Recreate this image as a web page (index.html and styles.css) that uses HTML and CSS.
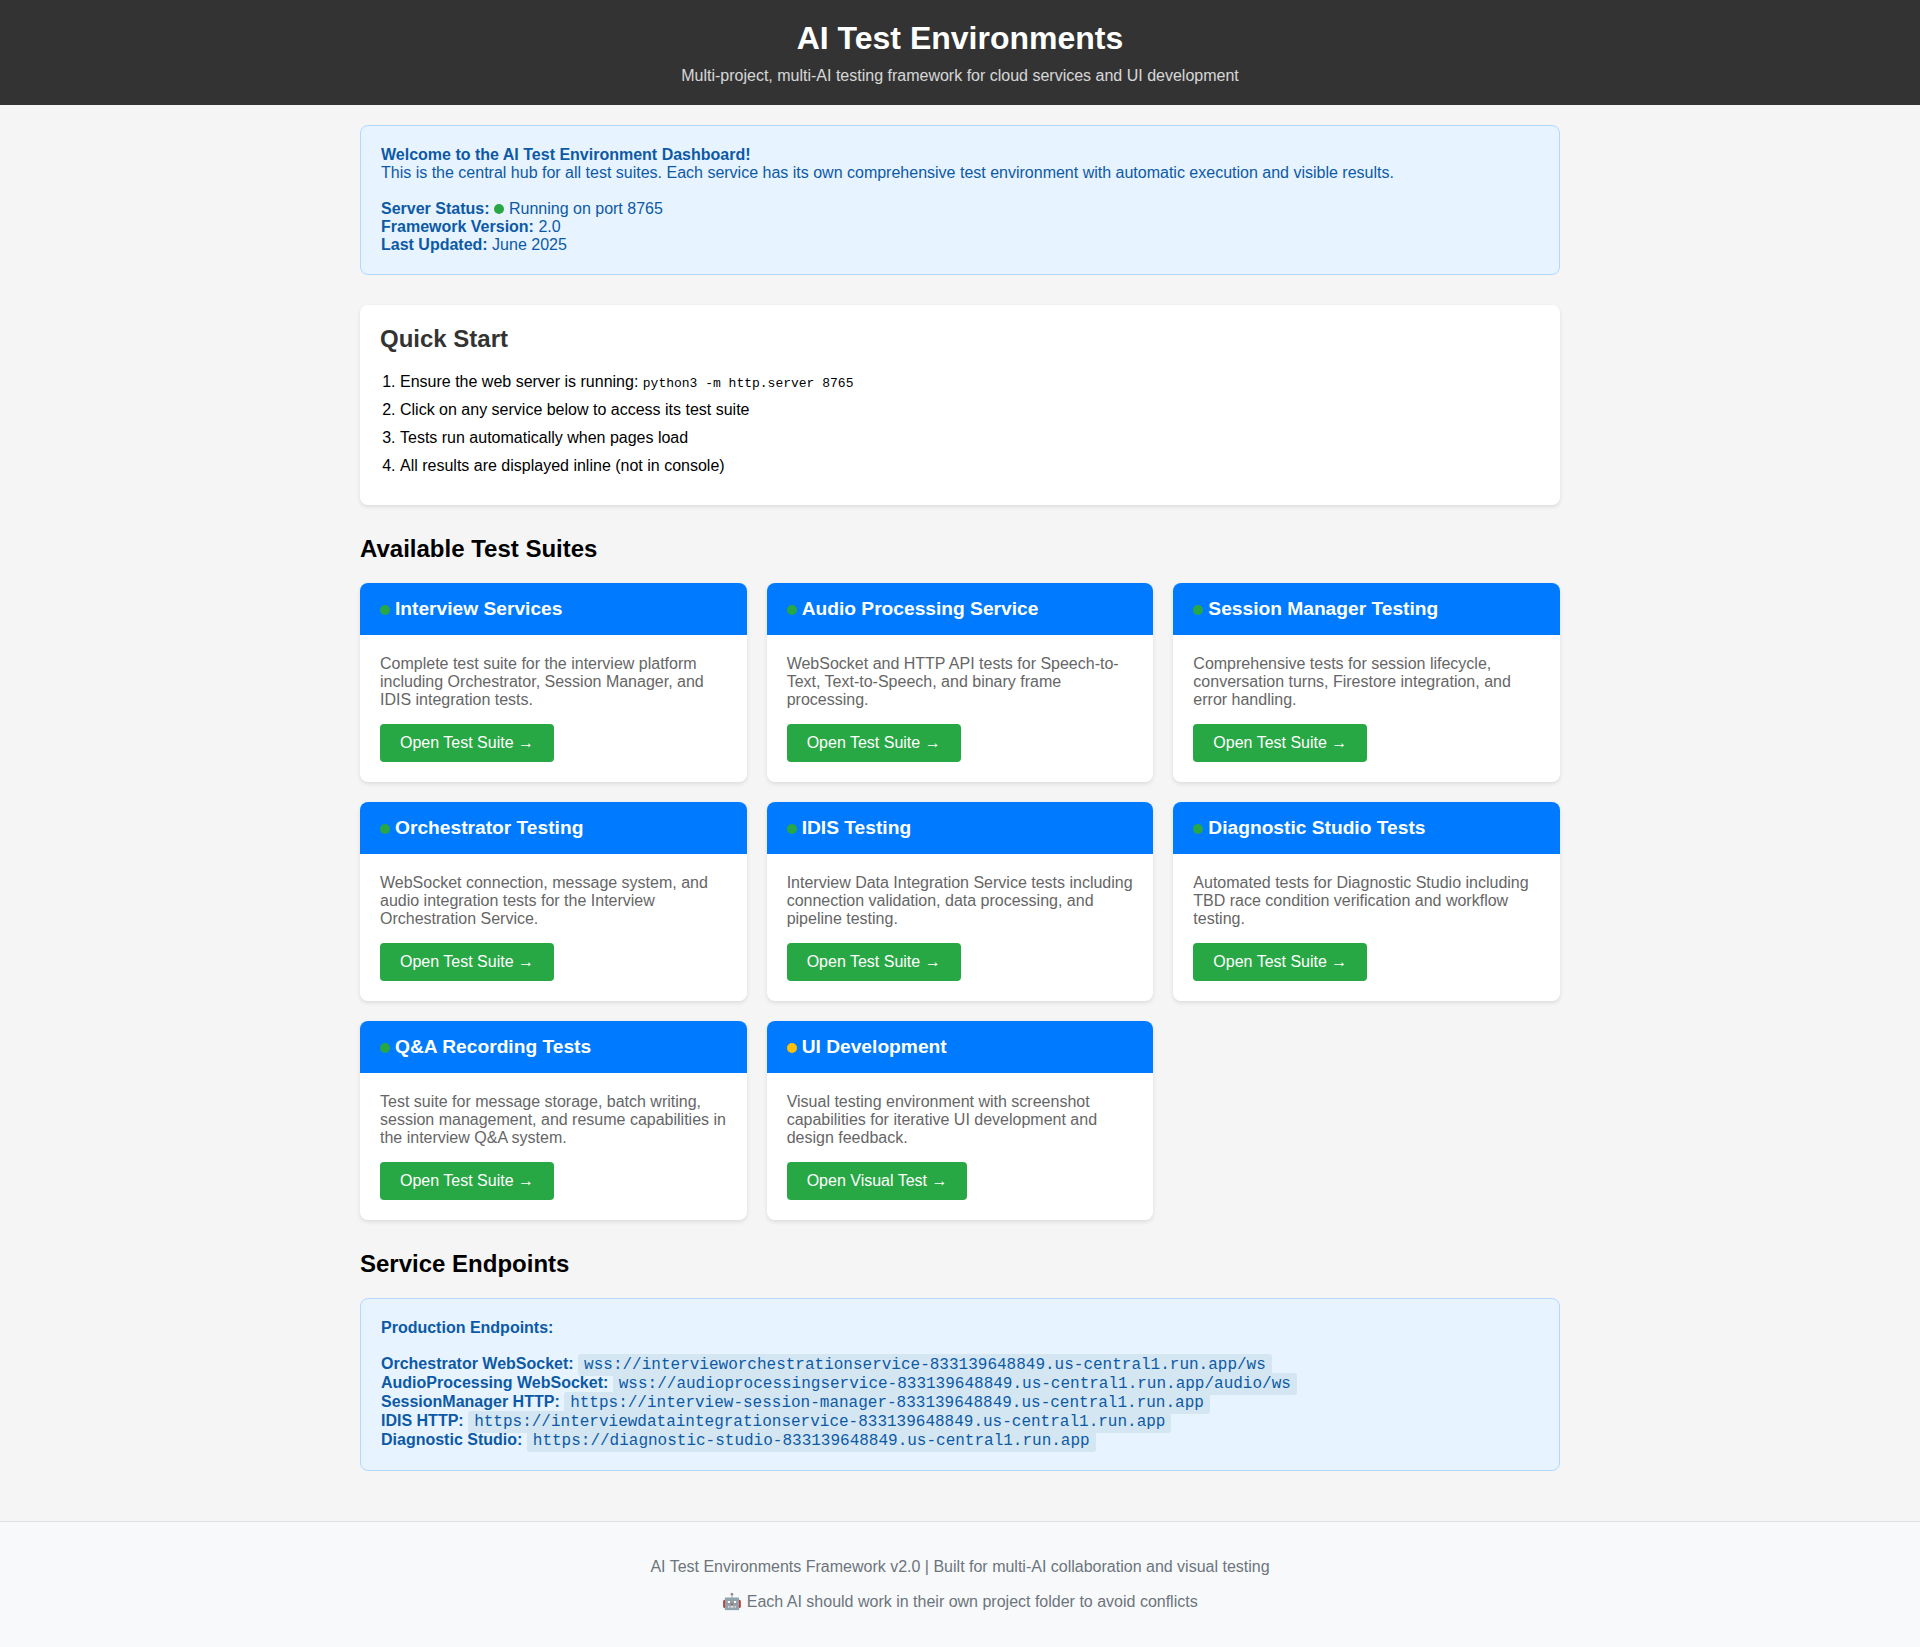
FILE: index.html
```html
<!DOCTYPE html>
<html lang="en">
<head>
<meta charset="UTF-8">
<title>AI Test Environments</title>
<link rel="stylesheet" href="styles.css">
</head>
<body>
<header class="header">
  <h1>AI Test Environments</h1>
  <p>Multi-project, multi-AI testing framework for cloud services and UI development</p>
</header>
<main class="container">
  <div class="info-box">
    <strong>Welcome to the AI Test Environment Dashboard!</strong><br>
    This is the central hub for all test suites. Each service has its own comprehensive test environment with automatic execution and visible results.<br><br>
    <strong>Server Status:</strong> <span class="status active"></span>Running on port 8765<br>
    <strong>Framework Version:</strong> 2.0<br>
    <strong>Last Updated:</strong> June 2025
  </div>
  <section class="quick-start">
    <h2>Quick Start</h2>
    <ol>
      <li>Ensure the web server is running: <code>python3 -m http.server 8765</code></li>
      <li>Click on any service below to access its test suite</li>
      <li>Tests run automatically when pages load</li>
      <li>All results are displayed inline (not in console)</li>
    </ol>
  </section>
  <h2>Available Test Suites</h2>
  <div class="grid">
    <article class="card">
      <div class="card-header"><span class="status active"></span>Interview Services</div>
      <div class="card-body"><p>Complete test suite for the interview platform including Orchestrator, Session Manager, and IDIS integration tests.</p><a class="button">Open Test Suite →</a></div>
    </article>
    <article class="card">
      <div class="card-header"><span class="status active"></span>Audio Processing Service</div>
      <div class="card-body"><p>WebSocket and HTTP API tests for Speech-to-Text, Text-to-Speech, and binary frame processing.</p><a class="button">Open Test Suite →</a></div>
    </article>
    <article class="card">
      <div class="card-header"><span class="status active"></span>Session Manager Testing</div>
      <div class="card-body"><p>Comprehensive tests for session lifecycle, conversation turns, Firestore integration, and error handling.</p><a class="button">Open Test Suite →</a></div>
    </article>
    <article class="card">
      <div class="card-header"><span class="status active"></span>Orchestrator Testing</div>
      <div class="card-body"><p>WebSocket connection, message system, and audio integration tests for the Interview Orchestration Service.</p><a class="button">Open Test Suite →</a></div>
    </article>
    <article class="card">
      <div class="card-header"><span class="status active"></span>IDIS Testing</div>
      <div class="card-body"><p>Interview Data Integration Service tests including connection validation, data processing, and pipeline testing.</p><a class="button">Open Test Suite →</a></div>
    </article>
    <article class="card">
      <div class="card-header"><span class="status active"></span>Diagnostic Studio Tests</div>
      <div class="card-body"><p>Automated tests for Diagnostic Studio including TBD race condition verification and workflow testing.</p><a class="button">Open Test Suite →</a></div>
    </article>
    <article class="card">
      <div class="card-header"><span class="status active"></span>Q&amp;A Recording Tests</div>
      <div class="card-body"><p>Test suite for message storage, batch writing, session management, and resume capabilities in the interview Q&amp;A system.</p><a class="button">Open Test Suite →</a></div>
    </article>
    <article class="card">
      <div class="card-header"><span class="status pending"></span>UI Development</div>
      <div class="card-body"><p>Visual testing environment with screenshot capabilities for iterative UI development and design feedback.</p><a class="button">Open Visual Test →</a></div>
    </article>
  </div>
  <h2>Service Endpoints</h2>
  <div class="info-box">
    <strong>Production Endpoints:</strong><br><br>
    <strong>Orchestrator WebSocket:</strong> <code>wss://intervieworchestrationservice-833139648849.us-central1.run.app/ws</code><br>
    <strong>AudioProcessing WebSocket:</strong> <code>wss://audioprocessingservice-833139648849.us-central1.run.app/audio/ws</code><br>
    <strong>SessionManager HTTP:</strong> <code>https://interview-session-manager-833139648849.us-central1.run.app</code><br>
    <strong>IDIS HTTP:</strong> <code>https://interviewdataintegrationservice-833139648849.us-central1.run.app</code><br>
    <strong>Diagnostic Studio:</strong> <code>https://diagnostic-studio-833139648849.us-central1.run.app</code>
  </div>
</main>
<footer class="footer">
  <p>AI Test Environments Framework v2.0 | Built for multi-AI collaboration and visual testing</p>
  <p>🤖 Each AI should work in their own project folder to avoid conflicts</p>
</footer>
</body>
</html>
```
FILE: styles.css
```css
body {
  margin: 0;
  background: #f5f5f5;
  font-family: "Liberation Sans", Arial, sans-serif;
}
.header {
  background: #333;
  color: white;
  padding: 20px;
  text-align: center;
}
.header h1 { margin: 0; font-size: 32px; line-height: 37px; }
.header p { margin: 10px 0 0; opacity: 0.8; }
.container {
  max-width: 1200px;
  margin: 0 auto;
  padding: 20px;
}
.container h2 { margin: 0 0 20px; font-size: 24px; line-height: 28px; }
.info-box {
  background: #e7f3fe;
  border: 1px solid #b3d7ff;
  border-radius: 8px;
  padding: 20px;
  margin-bottom: 30px;
  color: #0c5aa6;
}
.info-box code {
  background: #d4e6f1;
  padding: 2px 6px;
  border-radius: 3px;
  font-family: "Liberation Mono", "Courier New", monospace;
  font-size: 16px;
}
.quick-start {
  background: white;
  border-radius: 8px;
  padding: 20px;
  margin-bottom: 30px;
  box-shadow: 0 2px 4px rgba(0, 0, 0, 0.1);
}
.quick-start h2 { color: #333; }
.quick-start ol { margin: 0; padding-left: 20px; }
.quick-start li { margin-bottom: 10px; }
.quick-start code { font-family: "Liberation Mono", monospace; font-size: 13px; }
.grid {
  display: grid;
  grid-template-columns: repeat(3, 1fr);
  gap: 20px;
  margin-bottom: 30px;
}
.card {
  background: white;
  border-radius: 8px;
  overflow: hidden;
  box-shadow: 0 2px 4px rgba(0, 0, 0, 0.1);
}
.card-header {
  background: #007bff;
  color: white;
  padding: 15px 20px;
  font-size: 19.2px;
  font-weight: bold;
}
.card-body { padding: 20px; }
.card-body p { margin: 0 0 15px; color: #666; }
.button {
  display: inline-block;
  background: #28a745;
  color: white;
  padding: 10px 20px;
  border-radius: 4px;
}
.status {
  display: inline-block;
  width: 10px;
  height: 10px;
  border-radius: 50%;
  margin-right: 5px;
}
.active { background: #28a745; }
.pending { background: #ffc107; }
.footer {
  padding: 20px;
  background: #f8f9fa;
  border-top: 1px solid #dee2e6;
  color: #6c757d;
  text-align: center;
}
.footer p { margin: 16px 0; }
```
